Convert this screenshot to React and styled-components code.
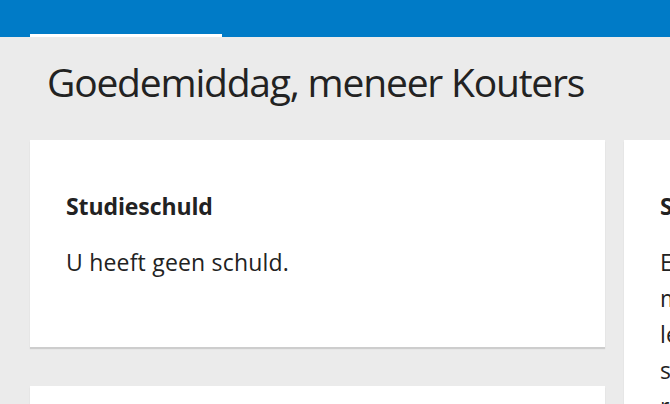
import React from "react";
import styled, { createGlobalStyle } from "styled-components";

const Global = createGlobalStyle`
  html, body { margin: 0; padding: 0; background: #ebebeb; overflow: hidden; }
  body { font-family: "Open Sans", "Noto Sans", sans-serif; color: #222; }
  * { box-sizing: border-box; }
`;

const Page = styled.div`
  width: 670px;
  height: 404px;
  overflow: hidden;
  background: #ebebeb;
`;

const TopBar = styled.header`
  height: 37px;
  background: #007bc7;
  display: flex;
  align-items: flex-end;
  padding: 0 30px;
`;

const Tab = styled.div`
  width: 192px;
  height: 3px;
  background: #ffffff;
`;

const Greeting = styled.h1`
  margin: 0;
  padding: 18px 0 0 47px;
  height: 103px;
  font-size: 39px;
  line-height: 53px;
  font-weight: 400;
  letter-spacing: -1.2px;
  color: #222;
  white-space: nowrap;
`;

const Grid = styled.div`
  display: grid;
  grid-template-columns: 575px 575px;
  column-gap: 19px;
  row-gap: 39px;
  padding: 0 30px;
  align-items: start;
`;

const Card = styled.section`
  background: #fff;
  padding: 48px 36px 67px;
  box-shadow: 0 2px 1px #cdcdcd;
  grid-row: ${(p) => (p.$rowSpan ? `span ${p.$rowSpan}` : "auto")};
`;

const CardTitle = styled.h2`
  margin: 0 0 20px;
  font-size: 23px;
  font-weight: 700;
  line-height: 36px;
  letter-spacing: -0.1px;
  white-space: nowrap;
`;

const CardText = styled.p`
  margin: 0;
  font-size: 23px;
  line-height: 36px;
  letter-spacing: 0.2px;
  white-space: nowrap;
`;

export default function App() {
  return (
    <Page>
      <Global />
      <TopBar>
        <Tab />
      </TopBar>
      <Greeting>Goedemiddag, meneer Kouters</Greeting>
      <Grid>
        <Card>
          <CardTitle>Studieschuld</CardTitle>
          <CardText>U heeft geen schuld.</CardText>
        </Card>
        <Card $rowSpan={2}>
          <CardTitle>Studiefinanciering</CardTitle>
          <CardText>
            Er is nog geen aanvraag voor studiefinanciering
            <br />
            met een basisbeurs, aanvullende beurs of
            <br />
            lening bij ons bekend. Vraag uw
            <br />
            studiefinanciering op tijd aan, zodat u
            <br />
            recht heeft op een studentenreisproduct.
          </CardText>
        </Card>
        <Card>
          <CardTitle>Collegegeld</CardTitle>
          <CardText>U heeft geen openstaande betalingen.</CardText>
        </Card>
      </Grid>
    </Page>
  );
}
